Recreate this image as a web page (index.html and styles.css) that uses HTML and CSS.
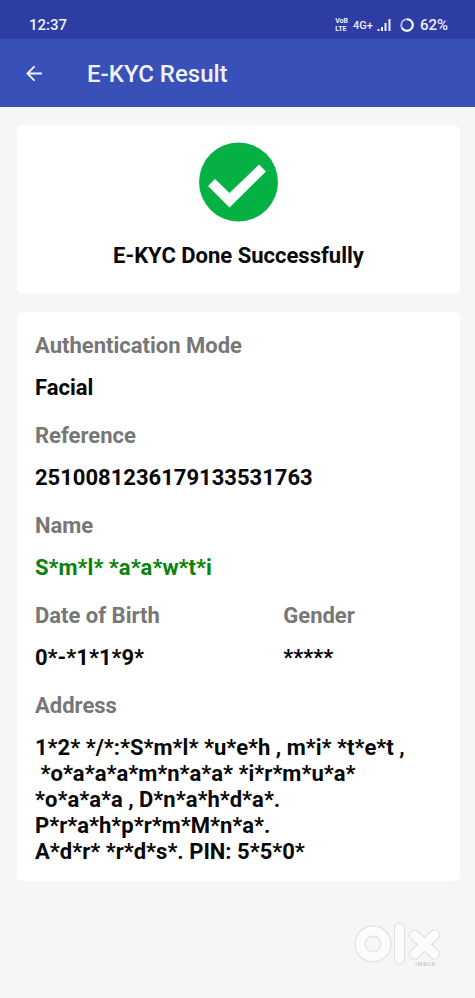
FILE: index.html
```html
<!DOCTYPE html>
<html lang="en">
<head>
<meta charset="utf-8">
<meta name="viewport" content="width=device-width, initial-scale=1">
<title>E-KYC Result</title>
<link rel="stylesheet" href="styles.css">
</head>
<body>
<div class="status">
  <span class="time">12:37</span>
  <div class="indicators">
    <span class="volte"><span>VoB</span><span>LTE</span></span>
    <span class="network">4G+</span>
    <svg class="signal" viewBox="0 0 14 14" aria-hidden="true"><path d="M1.500 11v2M5 9v4M8.500 5v8M12.500 1v12"/></svg>
    <svg class="battery" viewBox="0 0 16 16" aria-hidden="true"><circle cx="8" cy="8" r="5.800"/><path d="M8 2.200A5.800 5.800 0 1 1 3 11"/></svg>
    <span class="percent">62%</span>
  </div>
</div>
<header class="appbar">
  <button class="back" type="button" aria-label="Back">
    <svg viewBox="0 0 18 18" aria-hidden="true"><path d="M17 9H2M9 1.500L1.500 9L9 16.500"/></svg>
  </button>
  <h1>E-KYC Result</h1>
</header>
<main>
  <section class="card result">
    <svg class="check" viewBox="0 0 80 80" aria-hidden="true"><circle cx="39.500" cy="40" r="39.500"/><path d="M9 44L16 37L30.500 51L60 22.500L67 29.500L30.500 65.500Z"/></svg>
    <h2>E-KYC Done Successfully</h2>
  </section>
  <dl class="card details">
    <div class="field"><dt>Authentication Mode</dt><dd>Facial</dd></div>
    <div class="field"><dt>Reference</dt><dd>2510081236179133531763</dd></div>
    <div class="field"><dt>Name</dt><dd class="name">S*m*l* *a*a*w*t*i</dd></div>
    <div class="pair">
      <div class="field"><dt>Date of Birth</dt><dd>0*-*1*1*9*</dd></div>
      <div class="field"><dt>Gender</dt><dd>*****</dd></div>
    </div>
    <div class="field"><dt>Address</dt><dd class="address">1*2* */*:*S*m*l* *u*e*h , m*i* *t*e*t ,
 *o*a*a*a*m*n*a*a* *i*r*m*u*a*
*o*a*a*a , D*n*a*h*d*a*.
P*r*a*h*p*r*m*M*n*a*.
A*d*r* *r*d*s*. PIN: 5*5*0*</dd></div>
  </dl>
</main>
<footer class="brand">
  <svg class="olx" viewBox="0 0 88 46" role="img" aria-label="olx">
    <g class="edge"><circle cx="19" cy="23" r="13"/><path d="M45.500 7V38M60.500 14L80.500 33M80.500 14L60.500 33"/></g>
    <g class="fill"><circle cx="19" cy="23" r="13"/><path d="M45.500 7V38M60.500 14L80.500 33M80.500 14L60.500 33"/></g>
  </svg>
  <span>INDIA</span>
</footer>
</body>
</html>
```
FILE: styles.css
```css
* { box-sizing: border-box; }
body {
  margin: 0;
  background: #f6f6f6;
  color: #080808;
  font-family: Roboto, "Liberation Sans", sans-serif;
}
h1, h2, dl, dd { margin: 0; }
.status {
  display: flex;
  justify-content: space-between;
  align-items: center;
  height: 39px;
  padding: 11px 27px 0 29px;
  background: #2d3da4;
  color: #eef0ff;
  font-size: 15px;
  font-weight: 500;
}
.indicators { display: flex; align-items: center; }
.volte {
  display: flex;
  flex-direction: column;
  margin-right: 5px;
  font-size: 7px;
  line-height: 8px;
  font-weight: 700;
}
.network { margin-right: 4px; font-size: 11px; }
.signal { width: 14px; height: 14px; margin-right: 8px; fill: none; stroke: #eef0ff; stroke-width: 2; }
.battery { width: 16px; height: 16px; margin-right: 5px; fill: none; stroke-width: 2; }
.battery circle { stroke: #a9b4ea; }
.battery path { stroke: #eef0ff; }
.appbar {
  display: flex;
  align-items: center;
  gap: 36px;
  height: 68px;
  padding: 0 18px;
  background: #3a50b9;
  color: #f0f3ff;
}
.appbar h1 { padding-top: 2px; font-size: 24px; line-height: 32px; font-weight: 500; }
.back {
  display: flex;
  padding: 8px;
  border: 0;
  background: none;
  color: inherit;
}
.back svg { width: 17px; height: 17px; fill: none; stroke: currentColor; stroke-width: 2; }
main {
  display: flex;
  flex-direction: column;
  gap: 18px;
  padding: 18px 15px 0 17px;
}
.card { border-radius: 6px; background: #fff; }
.result {
  display: flex;
  flex-direction: column;
  align-items: center;
  gap: 20px;
  padding: 17px 16px 25px;
}
.check { width: 80px; height: 80px; fill: #05b143; }
.check path { fill: #fff; }
.result h2 { font-size: 22px; line-height: 27px; font-weight: 700; }
.details {
  display: flex;
  flex-direction: column;
  gap: 22px;
  padding: 21px 18px 16px;
  font-size: 22px;
  line-height: 26px;
  font-weight: 700;
}
.field { display: flex; flex-direction: column; gap: 16px; }
.pair { display: grid; grid-template-columns: 61% 39%; }
dt { color: #777; }
.name { color: #078307; }
.address { white-space: pre-wrap; }
.brand {
  display: flex;
  flex-direction: column;
  align-items: flex-end;
  padding: 40px 33px 0 0;
}
.brand span { margin-top: -6px; padding-right: 6px; color: #c8c8c8; font-size: 6px; line-height: 6px; font-weight: 700; letter-spacing: 1px; }
.olx { width: 88px; height: 46px; fill: none; stroke-linecap: round; }
.edge { stroke: #dedede; stroke-width: 11; }
.fill { stroke: #fcfcfc; stroke-width: 9; }
```
